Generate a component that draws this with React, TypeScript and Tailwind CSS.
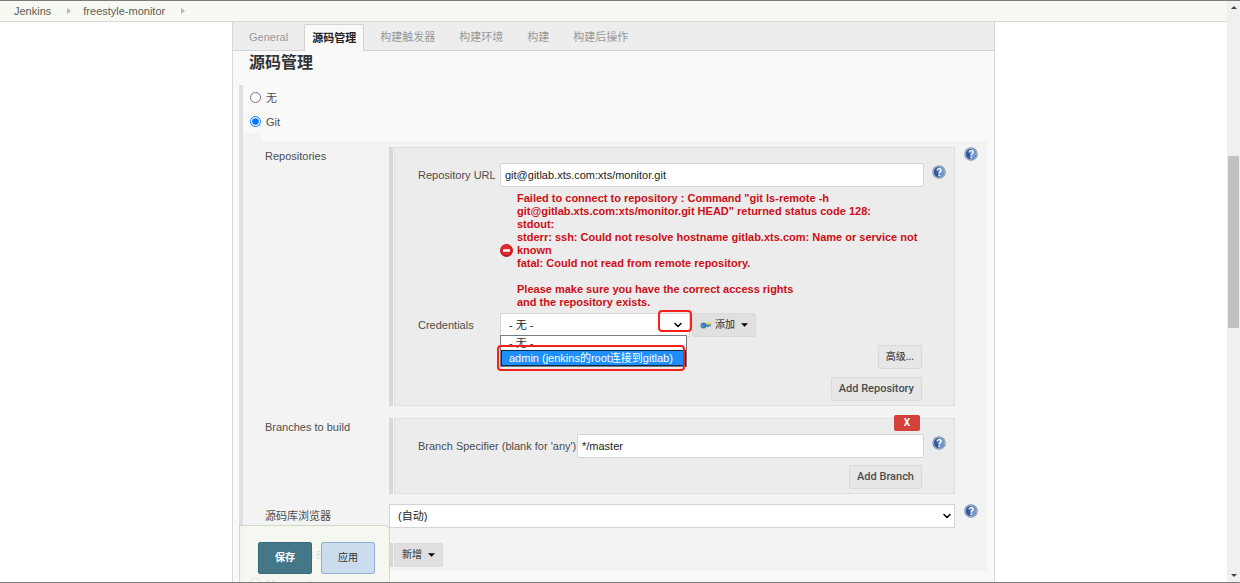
import React, { useState } from 'react';
import { ChevronDown } from 'lucide-react';

const TABS = ['General', '源码管理', '构建触发器', '构建环境', '构建', '构建后操作'];

const ERROR_TEXT = `Failed to connect to repository : Command "git ls-remote -h
git@gitlab.xts.com:xts/monitor.git HEAD" returned status code 128:
stdout:
stderr: ssh: Could not resolve hostname gitlab.xts.com: Name or service not known
fatal: Could not read from remote repository.

Please make sure you have the correct access rights
and the repository exists.`;

const CREDENTIALS = [
  { value: 'none', label: '- 无 -' },
  { value: 'admin', label: 'admin (jenkins的root连接到gitlab)' },
];

const Crumb: React.FC<{ children: React.ReactNode }> = ({ children }) => (
  <li className="flex items-center">
    <a href="#" className="text-[#5b5f58]">{children}</a>
    <svg viewBox="0 0 4 6" className="mr-3 ml-4 h-[6px] w-1 fill-[#b3b7b0]" aria-hidden="true">
      <path d="M0 0L4 3L0 6Z" />
    </svg>
  </li>
);

const HelpButton: React.FC<{ topic: string }> = ({ topic }) => (
  <button type="button" aria-label={`Help: ${topic}`} className="block h-[14px] w-[14px] shrink-0">
    <svg viewBox="0 0 28 28" className="h-[14px] w-[14px]">
      <circle cx="14" cy="14" r="13.5" fill="#7f93ab" />
      <circle cx="14" cy="14" r="11.8" fill="#a9bcd4" />
      <circle cx="14" cy="14" r="10.4" fill="#2f5a9f" />
      <path d="M14 3.6A10.4 10.4 0 0 1 24.4 14C24 20 20 23 15 24.4C12 18 12 10 14 3.6Z" fill="#7899cb" />
      <path d="M10.5 10.8C10.5 6 18.4 6.2 18.2 10.8C18.1 13.6 14.2 13.8 14.2 17" fill="none" stroke="#fff" strokeWidth="2.8" />
      <circle cx="14.2" cy="20.8" r="1.7" fill="#fff" />
    </svg>
  </button>
);

const Caret: React.FC = () => (
  <svg viewBox="0 0 8 4" className="h-1 w-[7px] fill-black" aria-hidden="true">
    <path d="M0 0H8L4 4Z" />
  </svg>
);

const GreyButton: React.FC<{ children: React.ReactNode; className?: string }> = ({ children, className = '' }) => (
  <button
    type="button"
    className={`flex h-6 items-center rounded-xs border border-[#d9d9d9] px-[7px] font-['Roboto','Noto_Sans_CJK_SC',sans-serif] font-medium text-[#4d4d4d] ${className}`}
  >
    {children}
  </button>
);

// One settings row: label on the left, control in the middle, help on the right
interface RowProps {
  label: string;
  htmlFor?: string;
  help?: boolean;
  tall?: boolean;
  className?: string;
  children: React.ReactNode;
}

const Row: React.FC<RowProps> = ({ label, htmlFor, help, tall, className = '', children }) => (
  <div className={`flex items-start ${className}`}>
    <label htmlFor={htmlFor} className={`w-32 shrink-0 pl-1 ${tall ? 'leading-6' : 'leading-[18px]'}`}>
      {label}
    </label>
    <div className="min-w-0 flex-1">{children}</div>
    <div className="w-8 shrink-0 pl-[9px]">{help && <HelpButton topic={label} />}</div>
  </div>
);

const RepeatedChunk: React.FC<{ children: React.ReactNode }> = ({ children }) => (
  <div className="flex gap-px">
    <div className="w-1 shrink-0 bg-[#d8d8d8]" />
    <div className="relative min-w-0 flex-1 border border-[#dfdfdf] bg-[#ececec] pt-[15px] pr-2 pb-1 pl-[23px]">
      {children}
    </div>
  </div>
);

const inputClass = 'h-6 min-w-0 flex-1 rounded-xs border border-[#d5d5d5] bg-white px-1 text-[11px] text-[#222] outline-none';

const App: React.FC = () => {
  const [scm, setScm] = useState('git');
  const [credential, setCredential] = useState('none');
  const [listOpen, setListOpen] = useState(true);

  return (
    <div className="flex h-screen overflow-hidden border-y border-[#7b7b78] bg-white font-['Liberation_Sans','Noto_Sans_CJK_SC',sans-serif] text-[11px] leading-4 text-[#4d4d4d]">
      <div className="relative flex min-w-0 flex-1 flex-col">
        <nav className="h-[21px] shrink-0 border-b border-[#d9dcd5] bg-[#f6f9f2] pl-[14px]">
          <ol className="flex h-5 items-center">
            <Crumb>Jenkins</Crumb>
            <Crumb>freestyle-monitor</Crumb>
          </ol>
        </nav>

        <main className="relative mx-auto min-h-0 w-full max-w-[763px] flex-1 overflow-hidden border-x border-[#d8d8d8] bg-[#f9f9f9]">
          <div className="flex h-[29px] items-end border-b border-[#d3d3d3] bg-[#ededed] pl-1">
            {TABS.map((tab, i) => (
              <a
                key={tab}
                href="#"
                className={
                  i === 1
                    ? 'mx-1 -mb-px h-[27px] rounded-t-xs border border-b-0 border-[#d3d3d3] bg-[#f9f9f9] px-[7px] leading-[26px] font-bold text-[#222]'
                    : 'mx-1 h-[26px] px-2 leading-[26px] text-[#999]'
                }
              >
                {tab}
              </a>
            ))}
          </div>

          <form onSubmit={(e) => e.preventDefault()}>
            <h2 className="pl-4 text-base leading-6 font-bold text-[#333]">源码管理</h2>

            <div className="mt-[10px] ml-[6px] border-l-4 border-[#e0e0e0]">
              <label className="flex h-6 items-center gap-[5px] pl-[7px]">
                <input type="radio" name="scm" className="h-[11px] w-[11px]" checked={scm === 'none'} onChange={() => setScm('none')} />
                <span className="pt-px">无</span>
              </label>
              <label className="flex h-6 items-center gap-[5px] pl-[7px]">
                <input type="radio" name="scm" className="h-[11px] w-[11px]" checked={scm === 'git'} onChange={() => setScm('git')} />
                <span className="pt-px">Git</span>
              </label>

              <div className="mr-[7px] flex">
                <div className="w-[18px] shrink-0 bg-[#f3f3f3]" />
                <div className="mt-2 min-w-0 flex-1 bg-[#f3f3f3] pt-[6px] pb-1">
                  <Row label="Repositories" help>
                    <RepeatedChunk>
                      <div className="flex items-start">
                        <label htmlFor="repo-url" className="w-[82px] shrink-0 leading-6">Repository URL</label>
                        <input id="repo-url" className={inputClass} defaultValue="git@gitlab.xts.com:xts/monitor.git" />
                        <div className="pt-[2px] pl-2"><HelpButton topic="Repository URL" /></div>
                      </div>

                      <div className="mt-[5px] flex items-center gap-1 pl-[82px]">
                        <svg viewBox="0 0 26 26" className="h-[13px] w-[13px] shrink-0" aria-hidden="true">
                          <circle cx="13" cy="13" r="13" fill="#c8141b" />
                          <circle cx="13" cy="12" r="10.5" fill="#dc2a2f" />
                          <rect x="6" y="10.5" width="14" height="5" rx="1" fill="#fff" />
                        </svg>
                        <div className="leading-[13px] font-bold whitespace-pre-wrap text-[#cc0f16]">
                          {ERROR_TEXT}
                        </div>
                      </div>

                      <div className="mt-1 flex items-start">
                        <label htmlFor="credentials" className="w-[82px] shrink-0 leading-6">Credentials</label>
                        <div className="relative w-[190px]">
                          <select
                            id="credentials"
                            value={credential}
                            onChange={(e) => setCredential(e.target.value)}
                            className="h-6 w-full appearance-none border border-[#d5d5d5] bg-white pl-2 text-[11px] text-[#222] outline-none"
                          >
                            {CREDENTIALS.map((c) => (
                              <option key={c.value} value={c.value}>{c.label}</option>
                            ))}
                          </select>
                          <ChevronDown className="pointer-events-none absolute top-[6px] right-[6px] h-3 w-3 text-black" strokeWidth={3} />
                          <div className="pointer-events-none absolute -top-[3px] -right-[2px] h-[22px] w-[34px] rounded-sm border-2 border-[#f5221b]" />
                          {listOpen && (
                            <>
                              <ul role="listbox" aria-label="Credentials" className="absolute top-[22px] left-0 w-[187px] border border-[#767b85] bg-white">
                                {CREDENTIALS.map((c) => (
                                  <li
                                    key={c.value}
                                    role="option"
                                    aria-selected={c.value === 'admin'}
                                    onClick={() => { setCredential(c.value); setListOpen(false); }}
                                    className={
                                      c.value === 'admin'
                                        ? 'h-4 overflow-hidden border border-[#102a4a] bg-[#1e8ffd] pl-[7px] leading-[14px] whitespace-nowrap text-white'
                                        : 'h-[14px] overflow-hidden pl-2 leading-[14px] text-[#333]'
                                    }
                                  >
                                    {c.label}
                                  </li>
                                ))}
                              </ul>
                              <div className="pointer-events-none absolute top-8 -left-[3px] h-[26px] w-[188px] rounded-sm border-2 border-[#f5221b]" />
                            </>
                          )}
                        </div>
                        <GreyButton className="ml-[2px] gap-[6px] bg-[#e0e0e0] text-[10px]">
                          <span className="flex items-center gap-[3px]">
                            <svg viewBox="0 0 24 16" className="h-2 w-3" aria-hidden="true">
                              <path d="M12 3H23V8H20V6H18V9H15V8H12Z" fill="#e3d35c" />
                              <path d="M8 7H22V11H20V10H18V12H8Z" fill="#4d8ab8" />
                              <circle cx="7" cy="9" r="6" fill="#3f7fb5" />
                              <circle cx="4.5" cy="9.5" r="1.6" fill="#7fb0d4" />
                            </svg>
                            添加
                          </span>
                          <Caret />
                        </GreyButton>
                      </div>

                      <div className="mt-2 flex flex-col items-end gap-2 pr-6">
                        <GreyButton className="bg-[#e7e7e7] text-[10px]">高级...</GreyButton>
                        <GreyButton className="bg-[#e7e7e7]">Add Repository</GreyButton>
                      </div>
                    </RepeatedChunk>
                  </Row>

                  <Row label="Branches to build" className="mt-3">
                    <RepeatedChunk>
                      <button
                        type="button"
                        aria-label="Delete branch"
                        className="absolute -top-1 right-[34px] h-4 w-[26px] rounded-xs bg-[#d4403a] font-['Roboto',sans-serif] text-[10px] leading-4 font-bold text-white"
                      >
                        X
                      </button>
                      <div className="flex items-start">
                        <label htmlFor="branch" className="w-[159px] shrink-0 leading-6">Branch Specifier (blank for 'any')</label>
                        <input id="branch" className={inputClass} defaultValue="*/master" />
                        <div className="pt-[2px] pl-2"><HelpButton topic="Branch Specifier" /></div>
                      </div>
                      <div className="mt-[7px] flex justify-end pr-6">
                        <GreyButton className="bg-[#e7e7e7]">Add Branch</GreyButton>
                      </div>
                    </RepeatedChunk>
                  </Row>

                  <Row label="源码库浏览器" htmlFor="browser" help tall className="mt-[10px]">
                    <div className="relative">
                      <select id="browser" className="h-6 w-full appearance-none border border-[#d5d5d5] bg-white pl-2 text-[11px] text-[#222] outline-none">
                        <option>(自动)</option>
                      </select>
                      <ChevronDown className="pointer-events-none absolute top-[6px] right-[2px] h-3 w-3 text-black" strokeWidth={3} />
                    </div>
                  </Row>

                  <Row label="Additional Behaviours" tall className="mt-[15px]">
                    <div className="flex gap-px">
                      <div className="w-1 shrink-0 bg-[#d8d8d8]" />
                      <GreyButton className="gap-[6px] bg-[#e0e0e0] text-[10px]">
                        新增
                        <Caret />
                      </GreyButton>
                    </div>
                  </Row>
                </div>
              </div>

              <label className="flex h-6 items-center gap-[5px] pl-[7px]">
                <input type="radio" name="scm" className="h-[11px] w-[11px]" checked={scm === 'hg'} onChange={() => setScm('hg')} />
                <span className="pt-px">Mercurial</span>
              </label>
            </div>

            {/* Sticky save bar */}
            <div className="absolute bottom-0 left-[6px] flex h-[57px] w-[151px] gap-[9px] rounded-tr-md border border-b-0 border-[#cfd6cb] bg-[#f4f8ef]/85 pt-4 pl-[18px]">
              <button type="submit" className="h-8 w-[54px] rounded-xs border border-[#3b6a7b] bg-[#447788] text-[10px] font-bold text-white">
                保存
              </button>
              <button type="button" className="h-8 w-[54px] rounded-xs border border-[#8fb0d3] bg-[#cadcee] text-[10px] text-[#333]">
                应用
              </button>
            </div>
          </form>
        </main>
      </div>

      {/* Scrollbar */}
      <div className="flex w-[13px] shrink-0 flex-col items-center bg-[#f0f0f0]" aria-hidden="true">
        <svg viewBox="0 0 6 3" className="my-[5px] h-[3px] w-[6px] shrink-0 fill-[#444]"><path d="M0 3H6L3 0Z" /></svg>
        <div className="grow-[142]" />
        <div className="w-[11px] grow-[172] bg-[#c1c1c1]" />
        <div className="grow-[241]" />
        <svg viewBox="0 0 6 3" className="my-[5px] h-[3px] w-[6px] shrink-0 fill-[#444]"><path d="M0 0H6L3 3Z" /></svg>
      </div>
    </div>
  );
};

export default App;
